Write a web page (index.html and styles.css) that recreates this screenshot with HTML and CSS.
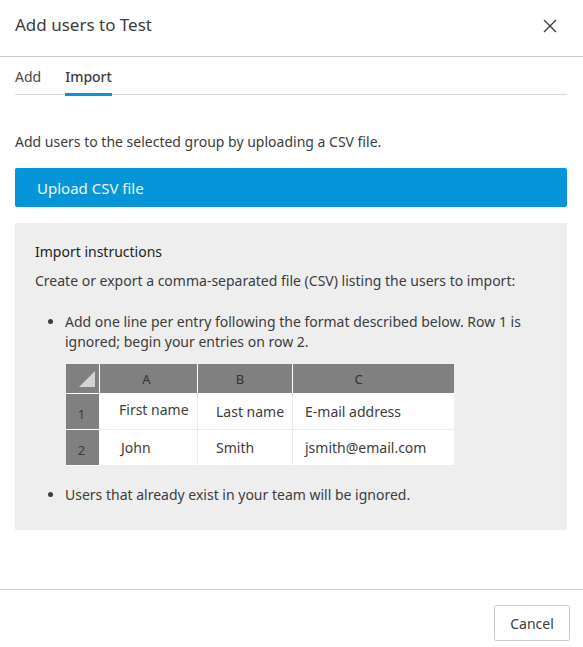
FILE: index.html
```html
<!DOCTYPE html>
<html lang="en">
<head>
<meta charset="utf-8">
<title>Add users to Test</title>
<link rel="stylesheet" href="styles.css">
</head>
<body>
<div class="dialog">
  <header class="dlg-header">
    <h1 class="dlg-title">Add users to Test</h1>
    <button class="close-btn" aria-label="Close">
      <svg width="14" height="14" viewBox="0 0 14 14"><path d="M1 1L13 13M13 1L1 13" stroke="#3c3c3c" stroke-width="1.3" fill="none"/></svg>
    </button>
  </header>
  <main class="dlg-body">
    <nav class="tabs">
      <span class="tab">Add</span>
      <span class="tab active">Import</span>
    </nav>
    <p class="desc">Add users to the selected group by uploading a CSV file.</p>
    <button class="upload-btn">Upload CSV file</button>
    <section class="instructions">
      <h2 class="ins-title">Import instructions</h2>
      <p class="ins-text">Create or export a comma-separated file (CSV) listing the users to import:</p>
      <ul class="ins-list">
        <li>Add one line per entry following the format described below. Row 1 is ignored; begin your entries on row 2.
          <div class="sheet">
            <div class="hc corner"><svg width="16" height="16" viewBox="0 0 16 16"><path d="M16 0L16 16L0 16Z" fill="#d3d3d3"/></svg></div>
            <div class="hc ca">A</div>
            <div class="hc cb">B</div>
            <div class="hc cc">C</div>
            <div class="rn">1</div>
            <div class="dc da first">First name</div>
            <div class="dc db">Last name</div>
            <div class="dc dcc">E-mail address</div>
            <div class="rn">2</div>
            <div class="dc da">John</div>
            <div class="dc db">Smith</div>
            <div class="dc dcc">jsmith@email.com</div>
          </div>
        </li>
        <li class="second">Users that already exist in your team will be ignored.</li>
      </ul>
    </section>
  </main>
  <footer class="dlg-footer">
    <button class="cancel-btn">Cancel</button>
  </footer>
</div>
</body>
</html>
```
FILE: styles.css
```css
* { box-sizing: border-box; }
html, body { margin: 0; padding: 0; background: #fff; }
body {
  font-family: "Noto Sans", "Open Sans", sans-serif;
  font-size: 14px;
  color: #3c3c3c;
}
.dialog {
  width: 583px;
  height: 647px;
  display: flex;
  flex-direction: column;
}
.dlg-header {
  height: 57px;
  border-bottom: 1px solid #cccccc;
  display: flex;
  align-items: flex-start;
  justify-content: space-between;
  padding: 14px 26px 0 15px;
}
.dlg-title {
  margin: 0;
  font-size: 17px;
  font-weight: 400;
  line-height: 22px;
  color: #3c3c3c;
}
.close-btn {
  border: 0;
  background: none;
  padding: 0;
  margin-top: 5px;
  width: 14px;
  height: 14px;
  display: flex;
}
.dlg-body {
  flex: 1;
  padding: 0 16px 0 15px;
}
.tabs {
  display: flex;
  gap: 24px;
  border-bottom: 1px solid #d4d4d4;
  height: 38px;
}
.tab {
  padding-top: 10px;
  line-height: 20px;
  height: 39px;
  color: #4a4a4a;
  border-bottom: 3px solid transparent;
}
.tab.active {
  color: #3c3c3c;
  font-weight: 500;
  border-bottom-color: #0696d7;
}
.desc {
  margin: 37px 0 0;
  line-height: 20px;
}
.upload-btn {
  display: block;
  width: 100%;
  margin-top: 16px;
  height: 39px;
  border: 0;
  border-radius: 2px;
  background: #0696d7;
  color: #eef8fd;
  font-family: inherit;
  font-size: 15px;
  text-align: left;
  padding: 0 22px;
}
.instructions {
  margin-top: 16px;
  background: #eeeeee;
  padding: 19px 20px 25px;
  height: 307px;
}
.ins-title {
  margin: 0;
  font-size: 14px;
  font-weight: 400;
  line-height: 20px;
  color: #222;
}
.ins-text {
  margin: 9px 0 0;
  line-height: 20px;
}
.ins-list {
  margin: 21px 0 0;
  padding-left: 30px;
  line-height: 20px;
}
.ins-list li.second {
  margin-top: 19px;
}
.sheet {
  margin: 12px 0 0 1px;
  display: grid;
  grid-template-columns: 34px 98px 95px 161px;
  grid-template-rows: 30px 36px 36px;
  width: 388px;
  line-height: 20px;
}
.hc {
  background: #808080;
  border-right: 1px solid #ffffff;
  border-bottom: 1px solid #ffffff;
  color: #333;
  font-size: 13px;
  display: flex;
  align-items: center;
  justify-content: center;
}
.hc.cc { border-right: 0; padding-right: 30px; }
.hc.ca { padding-right: 4px; }
.hc.cb { padding-right: 10px; }
.corner {
  justify-content: flex-end;
  align-items: flex-start;
  padding: 7px 4px 0 0;
}
.rn {
  background: #808080;
  border-right: 1px solid #ffffff;
  border-bottom: 1px solid #ffffff;
  color: #3a3a3a;
  font-size: 13px;
  display: flex;
  align-items: center;
  justify-content: center;
  padding-top: 4px;
  padding-right: 2px;
}
.dc {
  background: #ffffff;
  border-right: 1px solid #ececec;
  border-bottom: 1px solid #ececec;
  display: flex;
  align-items: center;
}
.dc.dcc { border-right: 0; padding-left: 12px; }
.dc.da { padding-left: 21px; }
.dc.da.first { padding-left: 19px; padding-bottom: 3px; }
.dc.db { padding-left: 18px; }
.dlg-footer {
  border-top: 1px solid #cccccc;
  height: 58px;
  display: flex;
  justify-content: flex-end;
  padding: 15px 13px 0 0;
}
.cancel-btn {
  width: 76px;
  height: 36px;
  border: 1px solid #cccccc;
  border-radius: 2px;
  background: #fff;
  color: #3c3c3c;
  font-family: inherit;
  font-size: 14px;
}
```
